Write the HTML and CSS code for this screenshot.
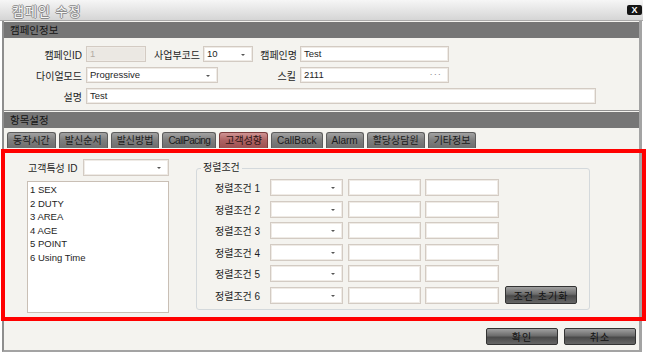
FILE: index.html
```html
<!DOCTYPE html>
<html lang="ko">
<head>
    <meta charset="UTF-8">
    <title>캠페인 수정</title>
    <link rel="stylesheet" href="styles.css">
</head>
<body>
    <div class="window">
        <div class="titlebar">
            <span class="title">캠페인 수정</span>
            <span class="close">X</span>
        </div>

        <div class="frame">
            <div class="section-head">캠페인정보</div>
            <div class="info">
                <div class="row">
                    <span class="lbl lbl-main">캠페인ID</span>
                    <span class="field field-off w60">1</span>
                    <span class="lbl w57">사업부코드</span>
                    <span class="field combo w50">10</span>
                    <span class="lbl w47">캠페인명</span>
                    <span class="field w149">Test</span>
                </div>
                <div class="row">
                    <span class="lbl lbl-main">다이얼모드</span>
                    <span class="field combo w132">Progressive</span>
                    <span class="lbl w82">스킬</span>
                    <span class="field w149 has-more">2111<span class="more">···</span></span>
                </div>
                <div class="row">
                    <span class="lbl lbl-main">설명</span>
                    <span class="field w510">Test</span>
                </div>
            </div>

            <div class="section-head section-head-2">항목설정</div>
            <div class="tabs">
                <span class="tab">동작시간</span>
                <span class="tab">발신순서</span>
                <span class="tab">발신방법</span>
                <span class="tab tab-tight">CallPacing</span>
                <span class="tab active">고객성향</span>
                <span class="tab">CallBack</span>
                <span class="tab">Alarm</span>
                <span class="tab">할당상담원</span>
                <span class="tab">기타정보</span>
            </div>

            <div class="panel">
                <div class="cust">
                    <div class="cust-head">
                        <span class="cust-lbl">고객특성 ID</span>
                        <span class="field combo w86"></span>
                    </div>
                    <ul class="listbox">
                        <li>1 SEX</li>
                        <li>2 DUTY</li>
                        <li>3 AREA</li>
                        <li>4 AGE</li>
                        <li>5 POINT</li>
                        <li>6 Using Time</li>
                    </ul>
                </div>

                <fieldset class="sort">
                    <legend>정렬조건</legend>
                    <div class="sort-rows">
                        <div class="sort-row">
                            <span class="sort-lbl">정렬조건 1</span>
                            <span class="field combo s1"></span>
                            <span class="field s2"></span>
                            <span class="field s3"></span>
                        </div>
                        <div class="sort-row">
                            <span class="sort-lbl">정렬조건 2</span>
                            <span class="field combo s1"></span>
                            <span class="field s2"></span>
                            <span class="field s3"></span>
                        </div>
                        <div class="sort-row">
                            <span class="sort-lbl">정렬조건 3</span>
                            <span class="field combo s1"></span>
                            <span class="field s2"></span>
                            <span class="field s3"></span>
                        </div>
                        <div class="sort-row">
                            <span class="sort-lbl">정렬조건 4</span>
                            <span class="field combo s1"></span>
                            <span class="field s2"></span>
                            <span class="field s3"></span>
                        </div>
                        <div class="sort-row">
                            <span class="sort-lbl">정렬조건 5</span>
                            <span class="field combo s1"></span>
                            <span class="field s2"></span>
                            <span class="field s3"></span>
                        </div>
                        <div class="sort-row">
                            <span class="sort-lbl">정렬조건 6</span>
                            <span class="field combo s1"></span>
                            <span class="field s2"></span>
                            <span class="field s3"></span>
                            <button class="btn btn-reset">조건 초기화</button>
                        </div>
                    </div>
                </fieldset>
            </div>

            <div class="footer">
                <button class="btn">확인</button>
                <button class="btn">취소</button>
            </div>
        </div>

        <!-- red highlight drawn over the tab panel -->
        <div class="mark"></div>
    </div>
</body>
</html>
```

FILE: styles.css
```css
* {
    box-sizing: border-box;
}

body {
    margin: 0;
    background: #fff;
    font-family: "Liberation Sans", "Noto Sans CJK KR", sans-serif;
    font-size: 9.5px;
    color: #1e1e1e;
}

.window {
    position: relative;
    width: 643px;
    height: 352px;
}

/* title bar */
.titlebar {
    height: 21px;
    display: flex;
    align-items: center;
    justify-content: space-between;
    padding: 0 1px 0 12px;
    background: linear-gradient(#f6f6f6, #d5d5d5);
    border-bottom: 1px solid #a9a9a9;
}

.title {
    font-size: 13px;
    letter-spacing: 1px;
    color: #f7f7f7;
    text-shadow: 1px 0 #8a8a8a, -1px 0 #8a8a8a, 0 1px #8a8a8a, 0 -1px #8a8a8a;
}

.close {
    width: 15px;
    height: 10px;
    border-radius: 2px;
    background: #151515;
    color: #fff;
    font-size: 9px;
    font-weight: bold;
    line-height: 10px;
    text-align: center;
}

.frame {
    width: 640px;
    margin-left: 2px;
    padding-top: 1px;
    background: #f4f3ef;
    border-left: 2px solid #8e8e8e;
    border-right: 3px solid #a3a3a3;
    border-bottom: 2px solid #a3a3a3;
}

.section-head {
    height: 16px;
    line-height: 16px;
    padding-left: 6px;
    background: #767676;
    font-size: 10.5px;
    color: #141414;
}

/* campaign info form */
.info {
    display: flex;
    flex-direction: column;
    gap: 5px;
    padding: 8px 0 6px;
    border-bottom: 1px solid #8f8f8f;
    margin-bottom: 1px;
}

.row {
    display: flex;
    align-items: center;
    height: 16px;
}

.lbl {
    flex: none;
    text-align: right;
    padding-right: 3px;
    font-size: 10px;
}

.lbl-main { width: 82px; padding-right: 4px; }
.w47 { width: 47px; }
.w57 { width: 57px; }
.w82 { width: 82px; padding-right: 4px; }

.field {
    position: relative;
    flex: none;
    display: block;
    height: 16px;
    line-height: 14px;
    padding: 0 3px;
    background: #fff;
    border: 1px solid #d3cbc3;
    box-shadow: inset 0 0 0 1px #efebe6;
}

.field-off {
    background: #ebe8e3;
    color: #b3aca4;
}

.w50 { width: 50px; }
.w60 { width: 60px; }
.w86 { width: 86px; }
.w132 { width: 132px; }
.w149 { width: 149px; }
.w510 { width: 510px; }

.combo::after {
    content: "";
    position: absolute;
    right: 7px;
    top: 7px;
    border-left: 2px solid transparent;
    border-right: 2px solid transparent;
    border-top: 2px solid #555;
}

.more {
    position: absolute;
    right: 6px;
    top: -1px;
    color: #8a8a8a;
    letter-spacing: 1px;
}

/* tabs */
.tabs {
    display: flex;
    gap: 3px;
    height: 21px;
    padding: 4px 0 0 3px;
}

.tab {
    height: 16px;
    line-height: 15px;
    padding: 0 5px;
    font-size: 10px;
    color: #1c1c1c;
    background: linear-gradient(#a2a2a2, #7d7d7d 50%, #6d6d6d);
    border: 1px solid #5c5c5c;
    border-bottom: none;
    border-radius: 3px 3px 0 0;
}

.tab-tight {
    letter-spacing: -0.6px;
}

.tab.active {
    background: linear-gradient(#cf9393, #ad6262 50%, #9c5050);
    border-color: #7b3d3d;
    color: #2a1212;
}

/* panel */
.panel {
    display: flex;
    align-items: flex-start;
    height: 171px;
    padding: 10px 0 0 23px;
}

.cust {
    width: 142px;
    display: flex;
    flex-direction: column;
    gap: 5px;
}

.cust-head {
    display: flex;
    align-items: center;
    justify-content: space-between;
    height: 17px;
    padding-left: 1px;
}

.cust-lbl {
    font-size: 10px;
}

.cust-head .field {
    height: 17px;
}

.listbox {
    list-style: none;
    margin: 0;
    height: 132px;
    padding: 1px 2px;
    line-height: 13.5px;
    background: #fff;
    border: 1px solid #c9bfb5;
}

.sort {
    width: 394px;
    margin: 3px 0 0 27px;
    padding: 5px 0 5px 18px;
    border: 1px solid #d4d9dc;
    border-radius: 3px;
}

.sort legend {
    padding: 0 2px;
    margin-left: -14px;
    line-height: 12px;
    font-size: 10px;
}

.sort-rows {
    display: flex;
    flex-direction: column;
    gap: 4.5px;
}

.sort-row {
    display: flex;
    align-items: center;
    height: 17px;
}

.sort-lbl {
    width: 55px;
    flex: none;
    font-size: 10px;
}

.sort-row .field {
    height: 17px;
}

.s1 { width: 73px; margin-right: 5px; }
.s2 { width: 73px; margin-right: 4px; }
.s3 { width: 74px; }

/* buttons */
.btn {
    width: 72px;
    height: 17px;
    padding: 0;
    font-family: inherit;
    font-size: 10px;
    letter-spacing: 1px;
    color: #111;
    background: linear-gradient(#a0a0a0, #6c6c6c 45%, #4a4a4a 55%, #666);
    border: 1px solid #333;
    border-radius: 2px;
}

.btn-reset {
    margin-left: 6px;
    height: 18px;
}

.footer {
    display: flex;
    justify-content: flex-end;
    gap: 6px;
    height: 30px;
    padding: 7px 3px 0 0;
    border-top: 1px solid #c9c9c9;
}

.mark {
    position: absolute;
    left: 1px;
    top: 149px;
    width: 645px;
    height: 172px;
    border: 4px solid #f00;
    pointer-events: none;
}
```
